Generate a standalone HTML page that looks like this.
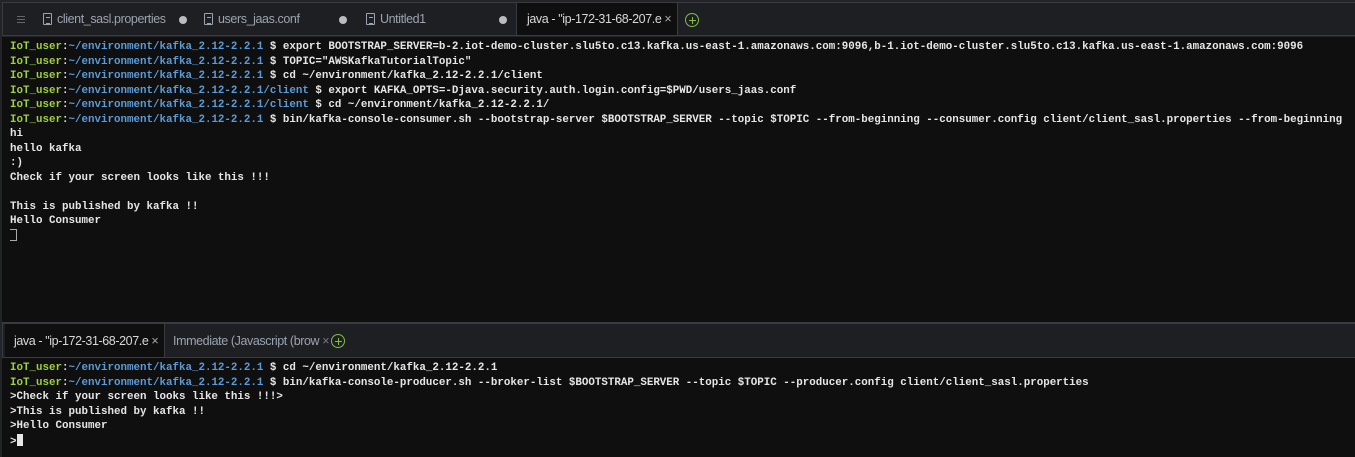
<!DOCTYPE html>
<html><head><meta charset="utf-8"><style>
*{margin:0;padding:0;box-sizing:border-box}
body{width:1355px;height:457px;background:#232428;overflow:hidden;position:relative;font-family:"Liberation Sans",sans-serif}
.tabbar{position:absolute;left:2px;right:0;background:#1e1f23;border-top:1px solid #3a3b40}
.tab{position:absolute;top:0;height:100%;color:#9aa3b0;font-size:12.5px;display:flex;align-items:center;letter-spacing:-0.4px}
.tab.active{background:#0f0f0f;color:#d8d8d8;border-right:1px solid #3a3b40;border-left:1px solid #3a3b40}
.dot{position:absolute;width:8px;height:8px;border-radius:50%;background:#bdbdbd}
.file{display:inline-block;width:9px;height:12px;border:1px solid #9aa3b0;border-radius:1px;margin-right:5px;position:relative}
.file:after{content:"";position:absolute;left:1.5px;right:1.5px;top:3px;height:5px;border-top:1px solid #9aa3b0;border-bottom:1px solid #9aa3b0}
.term{position:absolute;left:2px;right:0;background:#0f0f0f;font-family:"Liberation Mono",monospace;font-size:10.83px;line-height:14.5px;color:#e6e6e6;font-weight:bold;white-space:pre;padding-left:8px;letter-spacing:0}
.g{color:#9ed236}.b{color:#5b9bd8}
.plus{position:absolute;width:14px;height:14px;border:1.3px solid #7fbf3f;border-radius:50%;color:#7fbf3f}
.plus:before{content:"";position:absolute;left:2.5px;right:2.5px;top:5.5px;height:1.3px;background:#7fbf3f}
.plus:after{content:"";position:absolute;top:2.5px;bottom:2.5px;left:5.5px;width:1.3px;background:#7fbf3f}
</style></head><body>
<div class="tabbar" style="top:2px;height:34px;border-left:1px solid #3a3b40;border-bottom:1px solid #3a3b40">
 <div style="position:absolute;left:14px;top:13px;width:8px;height:7px;border-top:1px solid #666;border-bottom:1px solid #666"><div style="margin-top:2px;border-top:1px solid #666"></div></div>
 <div class="tab" style="left:40px"><span class="file"></span>client_sasl.properties</div>
 <div class="dot" style="left:176px;top:13px"></div>
 <div class="tab" style="left:201px"><span class="file"></span>users_jaas.conf</div>
 <div class="dot" style="left:336px;top:13px"></div>
 <div class="tab" style="left:363px"><span class="file"></span>Untitled1</div>
 <div class="dot" style="left:496px;top:13px"></div>
 <div class="tab active" style="left:513px;width:162px;padding-left:10px">java - "ip-172-31-68-207.e <span style="margin-left:3px;color:#aaa">×</span></div>
 <div class="plus" style="left:682px;top:10px"></div>
</div>
<div class="term" style="top:37px;height:285px;padding-top:3px"><span class="g">IoT_user</span>:<span class="b">~/environment/kafka_2.12-2.2.1</span> $ export BOOTSTRAP_SERVER=b-2.iot-demo-cluster.slu5to.c13.kafka.us-east-1.amazonaws.com:9096,b-1.iot-demo-cluster.slu5to.c13.kafka.us-east-1.amazonaws.com:9096
<span class="g">IoT_user</span>:<span class="b">~/environment/kafka_2.12-2.2.1</span> $ TOPIC="AWSKafkaTutorialTopic"
<span class="g">IoT_user</span>:<span class="b">~/environment/kafka_2.12-2.2.1</span> $ cd ~/environment/kafka_2.12-2.2.1/client
<span class="g">IoT_user</span>:<span class="b">~/environment/kafka_2.12-2.2.1/client</span> $ export KAFKA_OPTS=-Djava.security.auth.login.config=$PWD/users_jaas.conf
<span class="g">IoT_user</span>:<span class="b">~/environment/kafka_2.12-2.2.1/client</span> $ cd ~/environment/kafka_2.12-2.2.1/
<span class="g">IoT_user</span>:<span class="b">~/environment/kafka_2.12-2.2.1</span> $ bin/kafka-console-consumer.sh --bootstrap-server $BOOTSTRAP_SERVER --topic $TOPIC --from-beginning --consumer.config client/client_sasl.properties --from-beginning
hi
hello kafka
:)
Check if your screen looks like this !!!

This is published by kafka !!
Hello Consumer
<span style="display:inline-block;width:7px;height:12px;border:1px solid #aaa;border-left:none;vertical-align:-2px"></span></div>
<div style="position:absolute;left:2px;right:0;top:322px;height:2px;background:#3a3b40"></div>
<div class="tabbar" style="top:324px;height:34px;border-left:1px solid #3a3b40;border-bottom:1px solid #3a3b40;border-top:none">
 <div class="tab active" style="left:2px;width:160px;padding-left:9px;border-left:none">java - "ip-172-31-68-207.e <span style="margin-left:3px;color:#aaa">×</span></div>
 <div class="tab" style="left:170px">Immediate (Javascript (brow <span style="margin-left:3px;color:#777">×</span></div>
 <div class="plus" style="left:328px;top:10px"></div>
</div>
<div class="term" style="top:358px;height:99px;padding-top:3px"><span class="g">IoT_user</span>:<span class="b">~/environment/kafka_2.12-2.2.1</span> $ cd ~/environment/kafka_2.12-2.2.1
<span class="g">IoT_user</span>:<span class="b">~/environment/kafka_2.12-2.2.1</span> $ bin/kafka-console-producer.sh --broker-list $BOOTSTRAP_SERVER --topic $TOPIC --producer.config client/client_sasl.properties
&gt;Check if your screen looks like this !!!&gt;
&gt;This is published by kafka !!
&gt;Hello Consumer
&gt;<span style="display:inline-block;width:6px;height:12px;background:#e6e6e6;vertical-align:-2px"></span></div>
</body></html>
